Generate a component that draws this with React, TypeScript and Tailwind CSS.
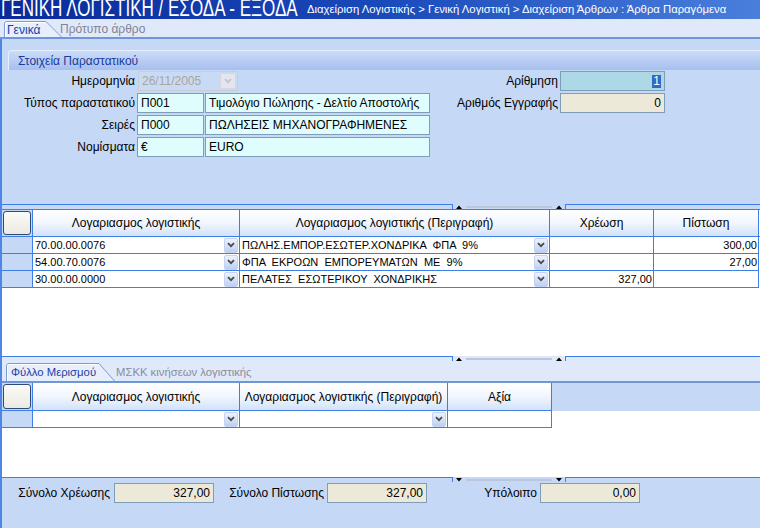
import React from "react";

function Chevron({ color = "#4a4a4a" }: { color?: string }) {
  return (
    <svg width="8" height="6" viewBox="0 0 8 6">
      <path d="M1 1.2 L4 4.2 L7 1.2" stroke={color} strokeWidth="1.8" fill="none" />
    </svg>
  );
}

function DropBtn() {
  return (
    <div className="w-[14px] h-[15px] mr-[1px] shrink-0 rounded-[2px] border border-[#c3d3f1] bg-linear-to-b from-[#eef3fd] to-[#bcd0f4] flex items-center justify-center">
      <Chevron />
    </div>
  );
}

function Tri({ down = false }: { down?: boolean }) {
  return (
    <svg width="6" height="4" viewBox="0 0 6 4">
      <path d={down ? "M0 0 L6 0 L3 3.5Z" : "M0 4 L6 4 L3 0.5Z"} fill="#000" />
    </svg>
  );
}

function Splitter({ down = false, bg = "" }: { down?: boolean; bg?: string }) {
  return (
    <div className={`h-[5px] shrink-0 flex ${bg}`}>
      <div className="w-[450px] border-t border-[#3d7fe6]" />
      <div className="w-[114px] border-x border-[#3d7fe6] flex items-center justify-between px-[3px]">
        <Tri down={down} />
        <div className="flex-1 mx-[4px] h-[2px] bg-[#eef3fb] border-y border-[#b9c6dc]" />
        <Tri down={down} />
      </div>
      <div className="flex-1 border-t border-[#3d7fe6]" />
    </div>
  );
}

function TabShape({ w, h, slant }: { w: number; h: number; slant: number }) {
  const d = `M0.5 ${h} L0.5 3 Q0.5 0.5 3 0.5 L${w - slant} 0.5 L${w - 0.5} ${h}`;
  return (
    <svg className="absolute inset-0" width={w} height={h} viewBox={`0 0 ${w} ${h}`}>
      <path d={d + " Z"} fill="#e7effc" stroke="none" />
      <path d={d} fill="none" stroke="#7d9bd6" strokeWidth="1" />
      <path d={`M1.5 ${h} L1.5 3 Q1.5 1.5 3 1.5 L${w - slant - 1} 1.5`} fill="none" stroke="#ffffff" strokeWidth="1" />
    </svg>
  );
}

function Box({
  w,
  bg = "bg-[#e0fdfd]",
  align = "left",
  children,
}: {
  w: string;
  bg?: string;
  align?: "left" | "right";
  children?: React.ReactNode;
}) {
  return (
    <div
      className={`${w} ${bg} h-[20px] shrink-0 border border-[#7f9db9] flex items-center ${
        align === "right" ? "justify-end pr-[3px]" : "pl-[3px]"
      } text-[12px] whitespace-nowrap overflow-hidden`}
    >
      {children}
    </div>
  );
}

const rows1 = [
  { acc: "70.00.00.0076", desc: "ΠΩΛΗΣ.ΕΜΠΟΡ.ΕΣΩΤΕΡ.ΧΟΝΔΡΙΚΑ  ΦΠΑ  9%", d: "", c: "300,00" },
  { acc: "54.00.70.0076", desc: "ΦΠΑ  ΕΚΡΟΩΝ  ΕΜΠΟΡΕΥΜΑΤΩΝ  ΜΕ  9%", d: "", c: "27,00" },
  { acc: "30.00.00.0000", desc: "ΠΕΛΑΤΕΣ  ΕΣΩΤΕΡΙΚΟΥ  ΧΟΝΔΡΙΚΗΣ", d: "327,00", c: "" },
];

const BC = "border-[#3d7fe6]";
const HEAD =
  "h-full border-r border-[#3d7fe6] bg-linear-to-b from-[#ffffff] via-[#f1f6fe] to-[#d3e2f9] flex items-center justify-center text-[12px]";

function SelHead() {
  return (
    <div className="w-[31px] h-full shrink-0 border-r border-[#3d7fe6] bg-[#c5d9f7] p-[1px]">
      <div className="w-full h-full rounded-[3px] border border-[#2f4a78] bg-linear-to-b from-[#fbfbf8] to-[#ebeae2]" />
    </div>
  );
}

export default function App() {
  return (
    <div className="w-[760px] h-[528px] overflow-hidden bg-[#c5d9f7] font-['Liberation_Sans',Arial,sans-serif] text-[12px] text-black flex flex-col">
      {/* Title bar */}
      <div className="h-[19px] shrink-0 bg-linear-to-r from-[#0a2a9a] via-[#1a49ba] to-[#4b7fdc] flex items-start overflow-hidden whitespace-nowrap text-white">
        <div className="w-[305px] shrink-0">
          <div className="inline-block origin-left scale-x-[0.74] -mt-[3px] ml-[1px] text-[23px] leading-[23px] font-normal">
            ΓΕΝΙΚΗ ΛΟΓΙΣΤΙΚΗ / ΕΣΟΔΑ - ΕΞΟΔΑ
          </div>
        </div>
        <div className="mt-[4px] ml-[2px] text-[11.3px] leading-[11px]">
          Διαχείριση Λογιστικής &gt; Γενική Λογιστική &gt; Διαχείριση Άρθρων : Άρθρα Παραγόμενα
        </div>
      </div>

      {/* Tab strip */}
      <div className="h-[18px] shrink-0 bg-[#dfe9fa] flex items-end">
        <div className="relative ml-[4px] w-[58px] h-[16px] shrink-0">
          <TabShape w={58} h={16} slant={16} />
          <span className="relative pl-[3px] leading-[16px] text-[#1c3ea6]">Γενικά</span>
        </div>
        <span className="-ml-[2px] leading-[16px] text-[#7f8394]">Πρότυπο άρθρο</span>
      </div>
      <div className="h-[2px] shrink-0 bg-[#7096d8]" />

      {/* Main */}
      <div className="flex-1 flex flex-col border-l-2 border-[#4f86e6] min-h-0">
        <div className="h-[11px] shrink-0" />
        {/* Section header */}
        <div className="h-[20px] shrink-0 ml-[6px] rounded-tl-[4px] border-t border-l border-[#e6effd] bg-linear-to-b from-[#cbdcf8] to-[#a7bfee] flex items-center pl-[9px] text-[12px] text-[#1a3b9c]">
          Στοιχεία Παραστατικού
        </div>

        {/* Form */}
        <div className="h-[134px] shrink-0 flex pt-[1px]">
          <div className="w-[428px] shrink-0 flex flex-col gap-[2px]">
            <div className="flex items-center h-[20px]">
              <div className="w-[133px] text-right">Ημερομηνία</div>
              <div className="ml-[3px] w-[100px] h-[20px] border border-[#c9cdd6] bg-[#c9daf5] flex items-center justify-between pl-[3px]">
                <span className="text-[#a9a69a]">26/11/2005</span>
                <div className="w-[16px] h-[16px] mr-[1px] rounded-[2px] border border-[#d4d7e2] bg-[#e4e5ee] flex items-center justify-center">
                  <Chevron color="#c3c3cc" />
                </div>
              </div>
            </div>
            <div className="flex items-center h-[20px]">
              <div className="w-[133px] text-right">Τύπος παραστατικού</div>
              <div className="ml-[2px]">
                <Box w="w-[67px]">Π001</Box>
              </div>
              <div className="ml-[1px]">
                <Box w="w-[225px]">Τιμολόγιο Πώλησης - Δελτίο Αποστολής</Box>
              </div>
            </div>
            <div className="flex items-center h-[20px]">
              <div className="w-[133px] text-right">Σειρές</div>
              <div className="ml-[2px]">
                <Box w="w-[67px]">Π000</Box>
              </div>
              <div className="ml-[1px]">
                <Box w="w-[225px]">ΠΩΛΗΣΕΙΣ ΜΗΧΑΝΟΓΡΑΦΗΜΕΝΕΣ</Box>
              </div>
            </div>
            <div className="flex items-center h-[20px]">
              <div className="w-[133px] text-right">Νομίσματα</div>
              <div className="ml-[2px]">
                <Box w="w-[67px]">€</Box>
              </div>
              <div className="ml-[1px]">
                <Box w="w-[225px]">EURO</Box>
              </div>
            </div>
          </div>
          <div className="flex flex-col gap-[2px]">
            <div className="flex items-center h-[20px]">
              <div className="w-[128px] text-right">Αρίθμηση</div>
              <div className="ml-[2px]">
                <Box w="w-[105px]" bg="bg-[#add8e6]" align="right">
                  <span className="bg-[#316ac5] text-white px-[1px] leading-[13px]">1</span>
                </Box>
              </div>
            </div>
            <div className="flex items-center h-[20px]">
              <div className="w-[128px] text-right">Αριθμός Εγγραφής</div>
              <div className="ml-[2px]">
                <Box w="w-[105px]" bg="bg-[#ece9d8]" align="right">
                  0
                </Box>
              </div>
            </div>
          </div>
        </div>

        <Splitter />

        {/* Grid 1 */}
        <div className={`h-[147px] shrink-0 bg-white border-t ${BC}`}>
          <div className={`h-[27px] flex border-b ${BC}`}>
            <SelHead />
            <div className={`w-[207px] ${HEAD}`}>Λογαριασμος λογιστικής</div>
            <div className={`w-[310px] ${HEAD}`}>Λογαριασμος λογιστικής (Περιγραφή)</div>
            <div className={`w-[104px] ${HEAD}`}>Χρέωση</div>
            <div className={`w-[105px] ${HEAD}`}>Πίστωση</div>
          </div>
          {rows1.map((r, i) => (
            <div key={i} className={`h-[17px] flex border-b ${BC} w-[757px] text-[11px]`}>
              <div className={`w-[31px] shrink-0 border-r ${BC} bg-[#c5d9f7]`} />
              <div className={`w-[207px] shrink-0 border-r ${BC} flex items-center justify-between pl-[2px]`}>
                <span>{r.acc}</span>
                <DropBtn />
              </div>
              <div className={`w-[310px] shrink-0 border-r ${BC} flex items-center justify-between pl-[2px]`}>
                <span className="whitespace-pre">{r.desc}</span>
                <DropBtn />
              </div>
              <div className={`w-[104px] shrink-0 border-r ${BC} flex items-center justify-end pr-[1px]`}>
                {r.d}
              </div>
              <div className={`w-[105px] shrink-0 border-r ${BC} flex items-center justify-end pr-[1px]`}>
                {r.c}
              </div>
            </div>
          ))}
        </div>

        {/* Tab strip 2 */}
        <div className="h-[25px] shrink-0 bg-[#dfe9fa] flex flex-col">
          <Splitter />
          <div className="flex-1 flex items-end">
            <div className="relative ml-[4px] w-[109px] h-[18px] shrink-0">
              <TabShape w={109} h={18} slant={16} />
              <span className="relative pl-[5px] leading-[18px] text-[11.3px] text-[#1c3ea6]">Φύλλο Μερισμού</span>
            </div>
            <span className="ml-[1px] leading-[18px] text-[11.3px] text-[#8a8d9c]">ΜΣΚΚ κινήσεων λογιστικής</span>
          </div>
        </div>
        <div className="h-[2px] shrink-0 bg-[#7096d8]" />

        {/* Grid 2 */}
        <div className="h-[94px] shrink-0 bg-white">
          <div className={`h-[28px] flex bg-[#c5d9f7]`}>
            <div className={`flex border-b ${BC}`}>
              <SelHead />
              <div className={`w-[207px] ${HEAD}`}>Λογαριασμος λογιστικής</div>
              <div className={`w-[208px] ${HEAD}`}>Λογαριασμος λογιστικής (Περιγραφή)</div>
              <div className={`w-[104px] ${HEAD}`}>Αξία</div>
            </div>
          </div>
          <div className={`h-[17px] flex border-b ${BC} w-[550px] text-[11px]`}>
            <div className={`w-[31px] shrink-0 border-r ${BC} bg-[#c5d9f7]`} />
            <div className={`w-[207px] shrink-0 border-r ${BC} flex items-center justify-end`}>
              <DropBtn />
            </div>
            <div className={`w-[208px] shrink-0 border-r ${BC} flex items-center justify-end`}>
              <DropBtn />
            </div>
            <div className={`w-[104px] shrink-0 border-r ${BC}`} />
          </div>
        </div>

        {/* Bottom panel */}
        <div className="flex-1 flex flex-col">
          <Splitter down />
          <div className="flex items-center h-[21px]">
            <div className="w-[108px] text-right">Σύνολο Χρέωσης</div>
            <div className="ml-[4px]">
              <Box w="w-[100px]" bg="bg-[#ece9d8]" align="right">
                327,00
              </Box>
            </div>
            <div className="w-[110px] text-right">Σύνολο Πίστωσης</div>
            <div className="ml-[3px]">
              <Box w="w-[100px]" bg="bg-[#ece9d8]" align="right">
                327,00
              </Box>
            </div>
            <div className="w-[110px] text-right">Υπόλοιπο</div>
            <div className="ml-[3px]">
              <Box w="w-[100px]" bg="bg-[#ece9d8]" align="right">
                0,00
              </Box>
            </div>
          </div>
        </div>
      </div>
    </div>
  );
}
